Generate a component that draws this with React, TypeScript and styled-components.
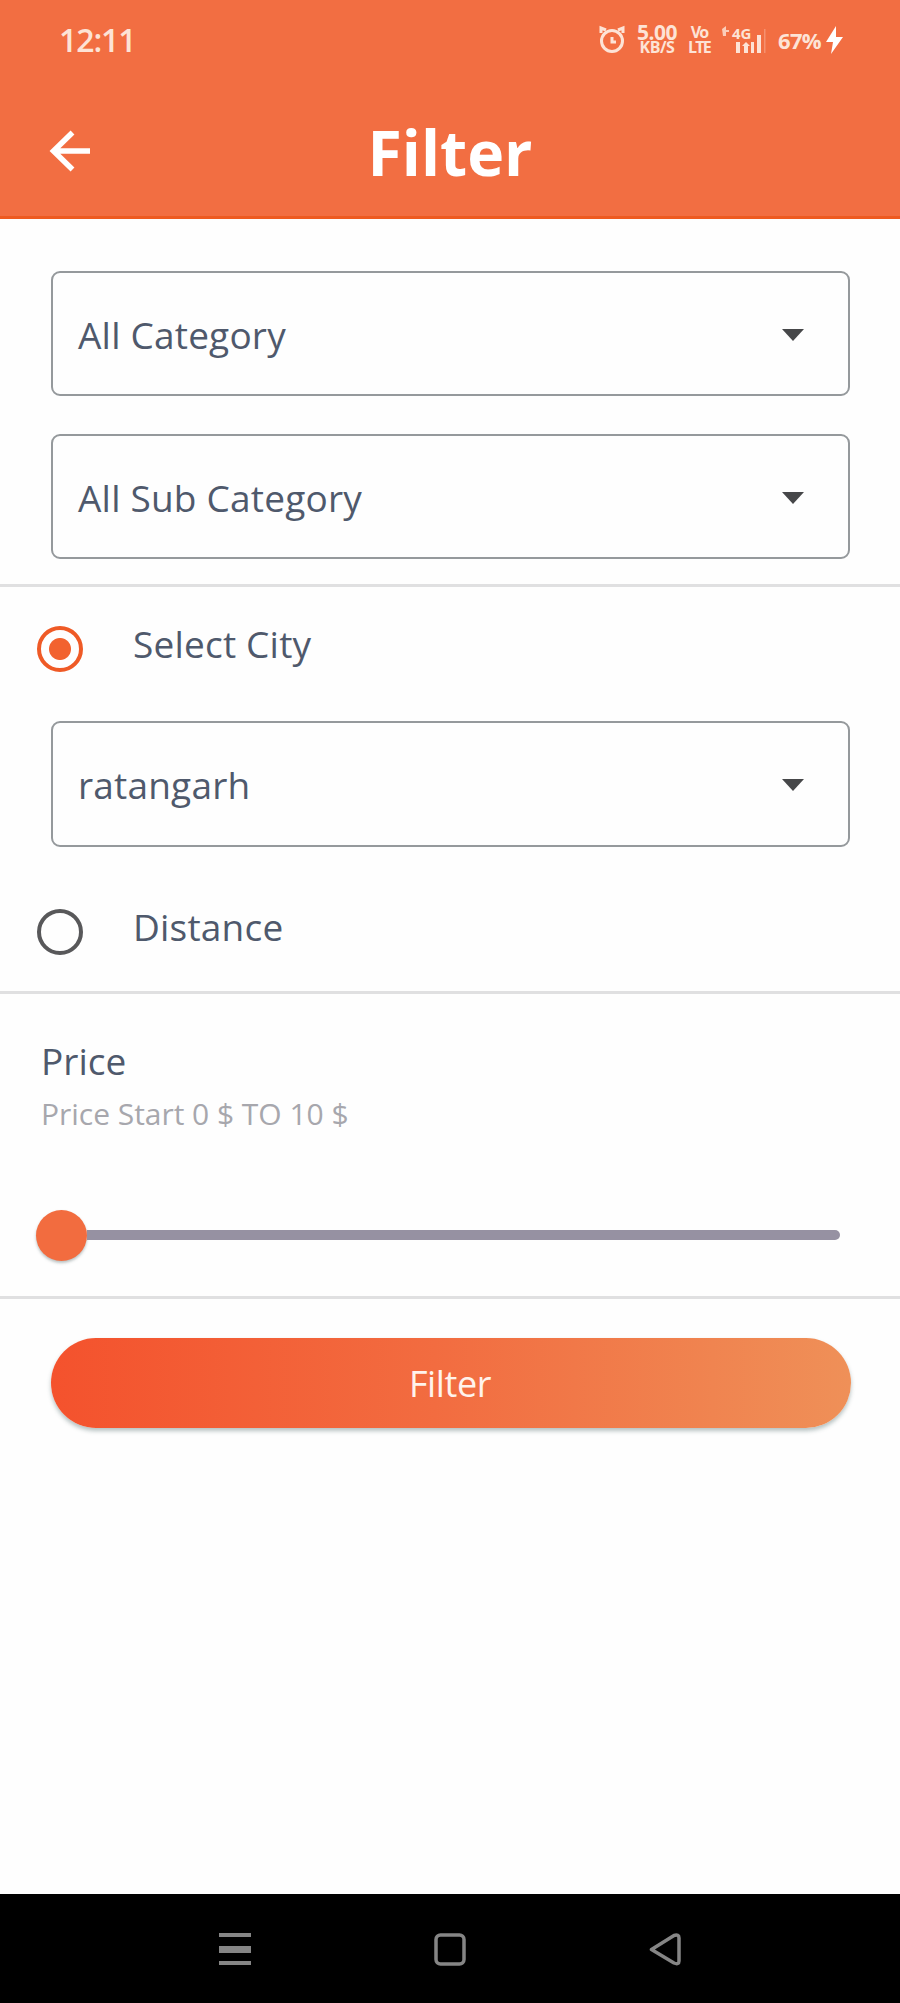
import React, { useState } from 'react';
import styled, { createGlobalStyle } from 'styled-components';

const GlobalStyle = createGlobalStyle`
  *, *::before, *::after { box-sizing: border-box; }
  body { margin: 0; background: #fefefe; }
  button { font: inherit; border: 0; padding: 0; background: none; color: inherit; cursor: pointer; }
  svg { display: block; }
`;

const Screen = styled.div`
  width: 900px;
  height: 2003px;
  display: flex;
  flex-direction: column;
  background: #fefefe;
  color: #4f596c;
  font-family: 'Open Sans', 'Noto Sans', sans-serif;
  overflow: hidden;
`;

const Header = styled.header`
  height: 219px;
  background: #f26e42;
  border-bottom: 3px solid #ee5a20;
  color: #fff;
`;

const StatusBar = styled.div`
  height: 80px;
  display: flex;
  align-items: center;
  justify-content: space-between;
  padding: 0 57px 0 59px;
  color: #fde3d6;
`;

const Clock = styled.span`
  font-size: 32px;
  line-height: 80px;
  font-weight: 600;
  letter-spacing: -1.1px;
`;

const StatusIcons = styled.div`
  display: flex;
  align-items: center;
  height: 32px;
`;

const StatusLabel = styled.span<{ $width: number; $left: number; $first: number; $spacing: number }>`
  width: ${(p) => p.$width}px;
  margin-left: ${(p) => p.$left}px;
  font-size: 16px;
  line-height: 15px;
  font-weight: 700;
  letter-spacing: ${(p) => p.$spacing}px;
  text-align: center;
  white-space: pre;
  &::first-line {
    font-size: ${(p) => p.$first}px;
  }
`;

const Network = styled.div`
  width: 44px;
  height: 32px;
  margin-left: 11px;
  display: flex;
  flex-direction: column;
`;

const NetworkType = styled.span`
  height: 15px;
  padding-left: 10px;
  font-size: 15px;
  line-height: 18px;
  font-weight: 700;
`;

const Battery = styled.span`
  width: 46px;
  margin-left: 12px;
  margin-right: 2px;
  font-size: 22px;
  line-height: 32px;
  font-weight: 700;
  letter-spacing: -0.7px;
`;

const AppBar = styled.div`
  height: 136px;
  display: grid;
  grid-template-columns: 140px 1fr 140px;
  align-items: center;
`;

const BackButton = styled.button`
  width: 42px;
  height: 42px;
  margin-left: 49px;
  margin-top: 6px;
`;

const Title = styled.h1`
  margin: 7px 0 0;
  text-align: center;
  font-size: 62.5px;
  line-height: 84px;
  font-weight: 700;
`;

const Section = styled.section<{ $height: number }>`
  height: ${(p) => p.$height}px;
  border-bottom: 3px solid #e0e0e1;
`;

const Selects = styled(Section)`
  display: flex;
  flex-direction: column;
  gap: 38px;
  padding: 52px 50px 0 51px;
`;

const Field = styled.button`
  width: 799px;
  height: 125px;
  flex: none;
  display: flex;
  align-items: center;
  justify-content: space-between;
  padding: 3px 44px 0 25px;
  border: 2px solid #95999c;
  border-radius: 9px;
  text-align: left;
`;

const FieldText = styled.span`
  font-size: 37px;
  line-height: 52px;
  letter-spacing: 0.2px;
`;

const CityField = styled(Field)`
  height: 126px;
  margin: 0 0 0 51px;
  padding-top: 2px;
`;

const RadioRow = styled.label<{ $height: number; $top: number }>`
  height: ${(p) => p.$height}px;
  padding: ${(p) => p.$top}px 0 0 37px;
  display: flex;
  align-items: flex-start;
  gap: 50px;
  cursor: pointer;
`;

const Radio = styled.input`
  appearance: none;
  width: 46px;
  height: 46px;
  margin: 8px 0 0;
  border: 4px solid #58585a;
  border-radius: 50%;
  &:checked {
    border-color: #ef5a26;
    background: radial-gradient(circle, #f2622f 0 10.5px, transparent 11.5px);
  }
`;

const PriceTitle = styled.h2`
  margin: 0;
  font-size: 37px;
  line-height: 52px;
  font-weight: 400;
`;

const PriceRange = styled.p`
  margin: 5px 0 0;
  font-size: 30px;
  line-height: 44px;
  letter-spacing: -0.03px;
  color: #a7a7ad;
`;

const PriceSection = styled(Section)`
  padding: 41px 60px 0 41px;
`;

const Slider = styled.div`
  height: 52px;
  margin: 73px 0 0 -5px;
  display: flex;
  align-items: center;
`;

const Thumb = styled.span`
  width: 51px;
  height: 51px;
  flex: none;
  border-radius: 50%;
  background: #f26c3f;
  box-shadow: 0 2px 3px rgba(60, 80, 80, 0.35);
`;

const Track = styled.span`
  flex: 1;
  height: 10px;
  border-radius: 0 5px 5px 0;
  background: #9691a2;
`;

const SubmitButton = styled.button`
  width: 800px;
  height: 90px;
  flex: none;
  margin: 39px 0 0 51px;
  padding: 1px 2px 0 0;
  border-radius: 45px;
  background: linear-gradient(90deg, #f4522d, #f26c40 48%, #ef9058);
  box-shadow: 0 3px 4px rgba(50, 80, 80, 0.35);
  color: #fff3ec;
  font-size: 36px;
  line-height: 89px;
  font-weight: 500;
  letter-spacing: -0.4px;
`;

const NavBar = styled.nav`
  height: 109px;
  margin-top: auto;
  display: flex;
  align-items: center;
  justify-content: center;
  gap: 183px;
  background: #000;
  color: #858585;
`;

const NavButton = styled.button`
  width: 32px;
  height: 32px;
`;

const Caret = () => (
  <svg width="22" height="14" viewBox="0 0 22 14" fill="#464749">
    <path d="M0 1h22L11 13z" />
  </svg>
);

const AlarmIcon = () => (
  <svg width="26" height="30" viewBox="0 0 26 30" fill="none" stroke="currentColor" strokeWidth="3">
    <circle cx="13" cy="16" r="10.500" />
    <path d="M2 8V3l5 2M24 8V3l-5 2M13 12v5h4" />
  </svg>
);

const SignalIcon = () => (
  <svg width="44" height="32" viewBox="0 0 44 32" fill="currentColor">
    <path d="M0 5l4-3v4h3v2H4v4H1z" opacity=".8" />
    <path d="M14 18h4v11h-4zM20 22l4-4 4 4h-2v7h-4v-7zM29 18h3v11h-3zM35 11h4v18h-4z" />
    <path d="M42 5h1.500v24H42z" opacity=".3" />
  </svg>
);

const NetworkGlyph = styled(SignalIcon)``;

const NetworkBars = styled.div`
  margin-top: -15px;
`;

const BoltIcon = () => (
  <svg width="17" height="28" viewBox="0 0 17 28" fill="#fff">
    <path d="M10 0L0 16h7L5 28 17 11h-7z" />
  </svg>
);

const BackIcon = () => (
  <svg width="42" height="42" viewBox="0 0 42 42" fill="none" stroke="#fff" strokeWidth="5.500">
    <path d="M41 21H5M23.500 2.500L4.500 21l19 18.500" />
  </svg>
);

function App() {
  const [mode, setMode] = useState('city');
  return (
    <>
      <GlobalStyle />
      <Screen>
        <Header>
          <StatusBar>
            <Clock>12:11</Clock>
            <StatusIcons>
              <AlarmIcon />
              <StatusLabel $width={44} $left={10} $first={21} $spacing={-0.5}>{'5.00\nKB/S'}</StatusLabel>
              <StatusLabel $width={24} $left={8} $first={16} $spacing={-1.8}>{'Vo\nLTE'}</StatusLabel>
              <Network>
                <NetworkType>4G</NetworkType>
                <NetworkBars><NetworkGlyph /></NetworkBars>
              </Network>
              <Battery>67%</Battery>
              <BoltIcon />
            </StatusIcons>
          </StatusBar>
          <AppBar>
            <BackButton aria-label="Back"><BackIcon /></BackButton>
            <Title>Filter</Title>
          </AppBar>
        </Header>

        <Selects $height={368}>
          <Field><FieldText>All Category</FieldText><Caret /></Field>
          <Field><FieldText>All Sub Category</FieldText><Caret /></Field>
        </Selects>

        <Section $height={407}>
          <RadioRow $height={134} $top={31}>
            <Radio type="radio" name="mode" checked={mode === 'city'} onChange={() => setMode('city')} />
            <FieldText>Select City</FieldText>
          </RadioRow>
          <CityField><FieldText>ratangarh</FieldText><Caret /></CityField>
          <RadioRow $height={130} $top={54}>
            <Radio type="radio" name="mode" checked={mode === 'distance'} onChange={() => setMode('distance')} />
            <FieldText>Distance</FieldText>
          </RadioRow>
        </Section>

        <PriceSection $height={305}>
          <PriceTitle>Price</PriceTitle>
          <PriceRange>Price Start 0 $ TO 10 $</PriceRange>
          <Slider>
            <Thumb />
            <Track />
          </Slider>
        </PriceSection>

        <SubmitButton>Filter</SubmitButton>

        <NavBar>
          <NavButton aria-label="Recent apps">
            <svg width="32" height="34" viewBox="0 0 32 34" fill="currentColor">
              <path d="M0 0h32v4H0zM0 13h32v7H0zM0 28h32v4H0z" />
            </svg>
          </NavButton>
          <NavButton aria-label="Home">
            <svg width="32" height="33" viewBox="0 0 32 33" fill="none" stroke="currentColor" strokeWidth="3.500">
              <rect x="2" y="2" width="28" height="29" rx="4.500" />
            </svg>
          </NavButton>
          <NavButton aria-label="Back">
            <svg width="32" height="33" viewBox="0 0 32 33" fill="none" stroke="currentColor" strokeWidth="3.500" strokeLinejoin="round">
              <path d="M2.500 16.500L25 2.500Q30 1 30 5v23q0 4-5 2z" />
            </svg>
          </NavButton>
        </NavBar>
      </Screen>
    </>
  );
}

export default App;
